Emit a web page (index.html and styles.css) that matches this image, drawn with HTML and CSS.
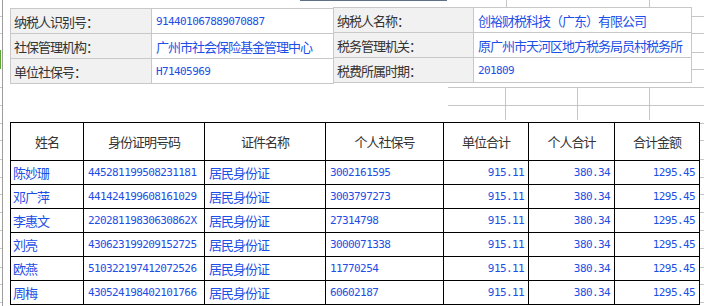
FILE: index.html
```html
<!DOCTYPE html>
<html lang="zh-CN">
<head>
<meta charset="utf-8">
<title>社保缴费明细</title>
<link rel="stylesheet" href="styles.css">
</head>
<body>
<div class="sheet">
  <svg class="grid" width="704" height="306" viewBox="0 0 704 306" shape-rendering="crispEdges">
    <g stroke="#c6c6c6" stroke-width="1">
      <line x1="0" y1="16.5" x2="2" y2="16.5"/>
      <line x1="0" y1="33.5" x2="2" y2="33.5"/>
      <line x1="0" y1="87.5" x2="2" y2="87.5"/>
      <line x1="0" y1="105.5" x2="2" y2="105.5"/>
      <line x1="0" y1="123.5" x2="2" y2="123.5"/>
      <line x1="0" y1="140.5" x2="2" y2="140.5"/>
      <line x1="0" y1="159.5" x2="2" y2="159.5"/>
      <line x1="0" y1="177.5" x2="2" y2="177.5"/>
      <line x1="0" y1="194.5" x2="2" y2="194.5"/>
      <line x1="0" y1="212.5" x2="2" y2="212.5"/>
      <line x1="0" y1="230.5" x2="2" y2="230.5"/>
      <line x1="0" y1="248.5" x2="2" y2="248.5"/>
      <line x1="0" y1="267.5" x2="2" y2="267.5"/>
      <line x1="0" y1="284.5" x2="2" y2="284.5"/>
      <line x1="0" y1="302.5" x2="2" y2="302.5"/>

      <line x1="506.5" y1="0" x2="506.5" y2="7"/>
      <line x1="649.5" y1="0" x2="649.5" y2="7"/>
      <line x1="692" y1="16.5" x2="704" y2="16.5"/>
      <line x1="692" y1="33.5" x2="704" y2="33.5"/>
      <line x1="692" y1="52.5" x2="704" y2="52.5"/>
      <line x1="692" y1="69.5" x2="704" y2="69.5"/>

      <line x1="448" y1="87.5" x2="704" y2="87.5"/>
      <line x1="448" y1="105.5" x2="704" y2="105.5"/>
      <line x1="505.5" y1="87" x2="505.5" y2="120"/>
      <line x1="577.5" y1="87" x2="577.5" y2="120"/>
      <line x1="649.5" y1="87" x2="649.5" y2="120"/>

      <line x1="700" y1="123.5" x2="704" y2="123.5"/>
      <line x1="700" y1="140.5" x2="704" y2="140.5"/>
      <line x1="700" y1="159.5" x2="704" y2="159.5"/>
      <line x1="700" y1="177.5" x2="704" y2="177.5"/>
      <line x1="700" y1="194.5" x2="704" y2="194.5"/>
      <line x1="700" y1="212.5" x2="704" y2="212.5"/>
      <line x1="700" y1="230.5" x2="704" y2="230.5"/>
      <line x1="700" y1="248.5" x2="704" y2="248.5"/>
      <line x1="700" y1="267.5" x2="704" y2="267.5"/>
      <line x1="700" y1="284.5" x2="704" y2="284.5"/>
      <line x1="700" y1="302.5" x2="704" y2="302.5"/>
    </g>
    <line x1="2.5" y1="0" x2="2.5" y2="306" stroke="#9c9c9c" stroke-width="1"/>
    <line x1="0.5" y1="50" x2="0.5" y2="69" stroke="#5aa832" stroke-width="1"/>
    <line x1="300" y1="0.5" x2="447" y2="0.5" stroke="#5f6f86" stroke-width="1"/>
  </svg>

  <div class="content">
    <div class="info-row">
      <div class="info info-left">
        <div class="lab">纳税人识别号：</div><div class="val num">914401067889070887</div>
        <div class="lab">社保管理机构：</div><div class="val cjk">广州市社会保险基金管理中心</div>
        <div class="lab">单位社保号：</div><div class="val num">H71405969</div>
      </div>
      <div class="info info-right">
        <div class="lab">纳税人名称：</div><div class="val cjk">创裕财税科技（广东）有限公司</div>
        <div class="lab">税务管理机关：</div><div class="val cjk">原广州市天河区地方税务局员村税务所</div>
        <div class="lab">税费所属时期：</div><div class="val num">201809</div>
      </div>
    </div>

    <div class="data">
      <div class="hd">姓名</div>
      <div class="hd">身份证明号码</div>
      <div class="hd">证件名称</div>
      <div class="hd">个人社保号</div>
      <div class="hd">单位合计</div>
      <div class="hd">个人合计</div>
      <div class="hd">合计金额</div>

      <div class="td cjk name">陈妙珊</div>
      <div class="td num">445281199508231181</div>
      <div class="td cjk">居民身份证</div>
      <div class="td num">3002161595</div>
      <div class="td num amt">915.11</div>
      <div class="td num amt">380.34</div>
      <div class="td num amt">1295.45</div>

      <div class="td cjk name">邓广萍</div>
      <div class="td num">441424199608161029</div>
      <div class="td cjk">居民身份证</div>
      <div class="td num">3003797273</div>
      <div class="td num amt">915.11</div>
      <div class="td num amt">380.34</div>
      <div class="td num amt">1295.45</div>

      <div class="td cjk name">李惠文</div>
      <div class="td num">22028119830630862X</div>
      <div class="td cjk">居民身份证</div>
      <div class="td num">27314798</div>
      <div class="td num amt">915.11</div>
      <div class="td num amt">380.34</div>
      <div class="td num amt">1295.45</div>

      <div class="td cjk name">刘亮</div>
      <div class="td num">430623199209152725</div>
      <div class="td cjk">居民身份证</div>
      <div class="td num">3000071338</div>
      <div class="td num amt">915.11</div>
      <div class="td num amt">380.34</div>
      <div class="td num amt">1295.45</div>

      <div class="td cjk name">欧燕</div>
      <div class="td num">510322197412072526</div>
      <div class="td cjk">居民身份证</div>
      <div class="td num">11770254</div>
      <div class="td num amt">915.11</div>
      <div class="td num amt">380.34</div>
      <div class="td num amt">1295.45</div>

      <div class="td cjk name">周梅</div>
      <div class="td num">430524198402101766</div>
      <div class="td cjk">居民身份证</div>
      <div class="td num">60602187</div>
      <div class="td num amt">915.11</div>
      <div class="td num amt">380.34</div>
      <div class="td num amt">1295.45</div>
    </div>
  </div>
</div>
</body>
</html>
```

FILE: styles.css
```css
html, body {
  margin: 0;
  padding: 0;
  background: #ffffff;
}

.sheet {
  position: relative;
  width: 704px;
  height: 306px;
  overflow: hidden;
  background: #ffffff;
}

.grid {
  position: absolute;
  left: 0;
  top: 0;
  display: block;
}

.content {
  position: relative;
  padding-left: 10px;
}

.info-row {
  display: flex;
  align-items: flex-start;
}

.info {
  display: grid;
  gap: 1px;
  padding: 1px;
  background: #c8c8c8;
  grid-auto-rows: 24px;
}

.info-left {
  grid-template-columns: 140px 181px;
  margin-top: 8px;
}

.info-right {
  grid-template-columns: 139px 217px;
  margin-top: 7px;
  margin-left: -1px;
}

.lab,
.val,
.hd,
.td {
  display: flex;
  align-items: center;
  white-space: nowrap;
  overflow: hidden;
}

.lab {
  background: #f1f1f1;
  color: #333333;
  padding-left: 3px;
  font: 13px "Noto Sans CJK SC", sans-serif;
  letter-spacing: -1px;
}

.val {
  background: #ffffff;
  color: #1d4fe6;
  padding-left: 4px;
}

.cjk {
  font: 13px "Noto Sans CJK SC", sans-serif;
  letter-spacing: -1px;
}

.num {
  font: 11px "DejaVu Sans Mono", "Noto Sans CJK SC", monospace;
  letter-spacing: -0.6px;
}

.data {
  display: grid;
  width: max-content;
  margin-top: 38px;
  gap: 1px;
  padding: 1px;
  background: #000000;
  grid-template-columns: 72px 120px 120px 117px 84px 85px 84px;
  grid-template-rows: 37px repeat(6, 23px);
}

.hd {
  background: #ffffff;
  color: #333333;
  justify-content: center;
  font: 13px "Noto Sans CJK SC", sans-serif;
  letter-spacing: -1px;
}

.td {
  background: #ffffff;
  color: #1d4fe6;
  padding-left: 4px;
}

.td.name {
  padding-left: 2px;
}

.td.amt {
  justify-content: flex-end;
  padding-left: 0;
  padding-right: 4px;
}
```
